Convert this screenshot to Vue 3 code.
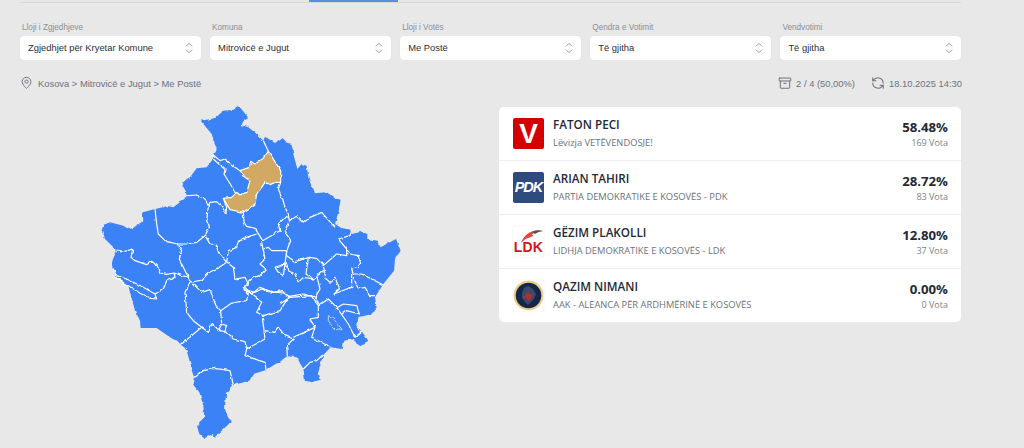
<script setup>
const filters = [
  { label: 'Lloji i Zgjedhjeve', value: 'Zgjedhjet për Kryetar Komune' },
  { label: 'Komuna', value: 'Mitrovicë e Jugut' },
  { label: 'Lloji i Votës', value: 'Me Postë' },
  { label: 'Qendra e Votimit', value: 'Të gjitha' },
  { label: 'Vendvotimi', value: 'Të gjitha' },
]
const rows = [
  { name: 'FATON PECI', party: 'Lëvizja VETËVENDOSJE!', pct: '58.48%', votes: '169 Vota', logo: 'v' },
  { name: 'ARIAN TAHIRI', party: 'PARTIA DEMOKRATIKE E KOSOVËS - PDK', pct: '28.72%', votes: '83 Vota', logo: 'pdk' },
  { name: 'GËZIM PLAKOLLI', party: 'LIDHJA DEMOKRATIKE E KOSOVËS - LDK', pct: '12.80%', votes: '37 Vota', logo: 'ldk' },
  { name: 'QAZIM NIMANI', party: 'AAK - ALEANCA PËR ARDHMËRINË E KOSOVËS', pct: '0.00%', votes: '0 Vota', logo: 'aak' },
]
const outline = 'M332 65 375 58 400 35 432 32 438 20 450 25 474 55 462 62 455 78 475 85 500 105 520 125 525 113 545 125 555 132 578 118 590 130 605 135 610 165 622 210 635 195 650 200 655 235 672 283 710 280 735 298 752 302 745 340 735 375 755 388 785 392 785 405 815 398 832 405 832 420 860 425 872 445 918 420 932 455 915 480 912 515 880 555 855 595 860 625 845 645 805 655 800 690 815 697 835 725 805 743 792 720 760 725 755 750 722 745 700 768 685 820 692 842 665 850 645 845 640 810 620 775 592 772 565 790 528 813 490 825 478 845 430 858 408 885 405 930 412 950 422 970 395 995 375 1013 368 1005 345 1017 328 1005 320 978 343 955 340 920 328 880 310 858 315 835 300 790 290 755 275 735 240 715 200 687 152 687 150 665 135 635 115 560 80 535 68 510 65 490 80 455 70 445 45 420 35 395 40 378 60 370 100 380 125 390 160 365 158 340 195 330 235 322 250 325 295 290 275 255 290 240 300 235 320 208 350 205 365 185 375 160 380 150 365 105Z'
const gold = 'M535 157 572 215 572 250 555 250 540 257 525 250 515 265 500 285 495 315 460 340 420 332 400 298 425 295 440 280 450 288 470 280 480 245 465 235 450 215 478 205 482 187 495 195 520 178Z'
const borders = [
  'M370 168 390 185 405 180 435 205 450 215',
  'M370 180 405 212 402 225 430 270 440 285',
  'M535 157 520 125',
  'M572 250 565 270 578 300 585 325 595 345 598 365 585 395 602 425 590 455',
  'M460 340 462 370 470 382 495 388 518 425 570 395 565 375 590 350',
  'M400 298 410 325 408 342 395 322 380 308 360 310 355 322 345 300 320 288 295 290',
  'M195 330 200 375 205 405 228 428 265 435 290 435 320 430 345 410 358 385 350 365 355 322',
  'M345 410 360 435 378 437 385 460 410 490',
  'M410 490 415 455 440 445 445 425 470 415 500 405',
  'M80 453 105 457 128 450 123 475 135 485 170 497 185 487 202 500 210 522 230 526 252 522 295 535',
  'M252 522 255 535 230 545 220 570 195 585',
  'M68 510 80 530 110 540 130 550 160 565 195 585 200 600 180 598 150 583 120 563 90 545 75 535',
  'M262 435 275 455 268 480 280 505 295 535 302 550',
  'M302 550 335 543 355 522 390 503 410 490',
  'M410 490 430 505 435 540 465 535 475 555 460 565 475 590',
  'M300 550 285 580 290 640 310 665 335 685 275 735',
  'M310 555 335 580 360 572 378 620 392 635 425 612 470 605 475 580 462 572 495 580 515 570 535 578 580 582 597 592 570 635 520 650 500 640 515 610 490 590 470 572',
  'M392 635 395 675 385 695 405 698 410 680 395 675',
  'M385 695 365 675 355 700 335 685',
  'M405 698 430 720 465 728 470 750 525 720 517 655',
  'M470 750 465 770 525 790 528 813',
  'M525 695 555 700 565 685 585 710 610 720 590 740 592 772',
  'M597 592 640 585 665 592 685 620 685 655 660 660 675 685 610 715',
  'M675 685 665 715 722 745',
  'M685 620 715 600 740 625 775 675 795 715 815 697',
  'M640 810 660 790 680 785 698 768',
  'M315 835 340 815 375 808 420 815 430 858',
  'M598 365 620 352 640 372 660 355 695 340 735 385',
  'M515 430 525 480 510 495 528 510 510 530 490 535 465 560 460 570',
  'M520 450 535 445 545 455 590 455',
  'M590 455 590 470 615 488 655 475 680 478 700 500 740 465 770 470 770 450 745 420 780 410 785 395',
  'M770 450 780 465 805 470 812 490 805 505 785 510 790 525 815 525 880 558',
  'M655 475 648 525 670 540',
  'M555 505 585 495 580 530 565 520 555 505',
  'M590 455 585 495 595 515 615 525 625 550 640 535 670 540 700 515 680 530 690 570 675 595',
  'M700 500 708 540 720 550 735 535 748 570 732 585 770 570 785 565 785 525',
  'M790 535 805 570 825 565 840 590 855 590',
  'M465 565 485 585 510 565 550 580 575 575 600 595 665 590 675 595 690 620',
  'M600 595 570 615',
  'M735 630 760 615 800 620 808 645 770 635 755 645',
]
</script>

<template>
  <div class="page">
    <div class="tabs"><span class="tab"></span></div>

    <div class="filters">
      <div v-for="f in filters" :key="f.label" class="filter">
        <div class="label">{{ f.label }}</div>
        <div class="select">
          <span>{{ f.value }}</span>
          <svg class="chev" width="10" height="12" viewBox="0 0 10 12" fill="none" stroke="#9ca3af" stroke-width="1" stroke-linecap="round" stroke-linejoin="round">
            <path d="M2 4 5 1.500 8 4M2 8 5 10.500 8 8" />
          </svg>
        </div>
      </div>
    </div>

    <div class="meta">
      <div class="crumbs">
        <svg width="13" height="14" viewBox="0 0 24 24" fill="none" stroke="#6b7280" stroke-width="1.800">
          <path d="M12 22s8-6.500 8-12.500a8 8 0 1 0-16 0C4 15.500 12 22 12 22Z" />
          <circle cx="12" cy="9.500" r="3" />
        </svg>
        <span>Kosova &gt; Mitrovicë e Jugut &gt; Me Postë</span>
      </div>
      <div class="status">
        <svg width="14" height="14" viewBox="0 0 24 24" fill="none" stroke="#6b7280" stroke-width="1.700" stroke-linecap="round" stroke-linejoin="round">
          <rect x="2" y="3.500" width="20" height="5" rx="1" />
          <path d="M4 8.500V20a1 1 0 0 0 1 1h14a1 1 0 0 0 1-1V8.500M10 12.500h4" />
        </svg>
        <span class="count">2 / 4 (50,00%)</span>
        <svg width="14" height="14" viewBox="0 0 24 24" fill="none" stroke="#6b7280" stroke-width="1.800" stroke-linecap="round" stroke-linejoin="round">
          <path d="M21 12a9 9 0 0 0-15.500-6.200L3 8.300M3 3v5.300h5.300M3 12a9 9 0 0 0 15.500 6.200l2.500-2.500M21 21v-5.300h-5.300" />
        </svg>
        <span>18.10.2025 14:30</span>
      </div>
    </div>

    <div class="main">
      <div class="map-col">
        <svg class="map" width="320" height="345" viewBox="0 0 960 1035">
          <defs>
            <filter id="rough" x="-5%" y="-5%" width="110%" height="110%">
              <feTurbulence type="fractalNoise" baseFrequency="0.06" numOctaves="2" seed="4" />
              <feDisplacementMap in="SourceGraphic" scale="9" xChannelSelector="R" yChannelSelector="G" />
            </filter>
          </defs>
          <g filter="url(#rough)">
            <path :d="outline" fill="#3b82f6" />
            <path v-for="(b, i) in borders" :key="i" :d="b" fill="none" stroke="#fff" stroke-width="3.600" stroke-linejoin="round" />
            <path d="M715 650 728 655 735 665 755 690 740 695 725 680 715 665Z" fill="none" stroke="#bcd4f8" stroke-width="3" />
            <path :d="gold" fill="#d1a964" stroke="#fff" stroke-width="3.600" stroke-linejoin="round" />
          </g>
        </svg>
      </div>

      <div class="card">
        <div v-for="r in rows" :key="r.name" class="row">
          <div class="logo" :class="'logo-' + r.logo">
            <span v-if="r.logo === 'v'" class="v-mark">V</span>
            <span v-else-if="r.logo === 'pdk'" class="pdk-mark">PDK</span>
            <template v-else-if="r.logo === 'ldk'">
              <svg class="swoosh" width="26" height="14" viewBox="0 0 26 14">
                <path d="M3 14C5 8 10 3 17 1.500c3-.5 6-.3 8 .5-5 0-9 1.500-11 3.500l1.500 1.500-8 3Z" fill="#e04848" />
                <path d="M14 3c3-1.500 7-2 11-1-3 .3-6 1.500-8 3Z" fill="#555" />
              </svg>
              <span class="ldk-mark">LDK</span>
            </template>
            <svg v-else width="31" height="31" viewBox="0 0 31 31">
              <circle cx="15.500" cy="15.500" r="15" fill="#e8cf8a" />
              <circle cx="15.500" cy="15.500" r="12.800" fill="#16264a" />
              <path d="M11 8l4-2 5 3 3 5-2 5-3 3-3 3-3-3-3-4 0-5Z" fill="#3a4a6a" />
              <path d="M10 18l5-6 3 3 3-1-3 5-3 2-2-3Z" fill="#a8322e" />
            </svg>
          </div>
          <div class="who">
            <div class="name">{{ r.name }}</div>
            <div class="party">{{ r.party }}</div>
          </div>
          <div class="result">
            <div class="pct">{{ r.pct }}</div>
            <div class="votes">{{ r.votes }}</div>
          </div>
        </div>
      </div>
    </div>
  </div>
</template>

<style scoped>
.page {
  box-sizing: border-box;
  width: 1024px;
  height: 448px;
  overflow: hidden;
  padding: 0 63px 0 20px;
  background: #e8e8e8;
  font-family: "Liberation Sans", Arial, sans-serif;
}
.tabs {
  position: relative;
  height: 3px;
  border-bottom: 1px solid #d8d8d8;
  box-sizing: border-box;
}
.tab {
  position: absolute;
  left: 289px;
  top: 0;
  width: 89px;
  height: 2px;
  background: #5b8fe0;
}
.filters {
  display: grid;
  grid-template-columns: repeat(5, 1fr);
  gap: 9.500px;
  margin-top: 19px;
}
.label {
  height: 14px;
  padding-left: 2px;
  font-size: 8.200px;
  line-height: 11px;
  color: #8b8f96;
}
.select {
  display: flex;
  align-items: center;
  justify-content: space-between;
  height: 24px;
  padding: 0 8px;
  background: #fff;
  border-radius: 4px;
  box-shadow: 0 0 1px rgba(0, 0, 0, 0.1);
  font-size: 9.400px;
  line-height: 22px;
  color: #2b2f38;
}
.select span { margin-bottom: 1px; }
.chev { margin-right: -1px; }
.meta {
  display: flex;
  align-items: center;
  justify-content: space-between;
  height: 16px;
  margin: 15px -1px 0 0;
  font-size: 9.400px;
  color: #6b7280;
}
.crumbs, .status {
  display: flex;
  align-items: center;
}
.crumbs svg { margin-right: 5px; }
.status svg { margin-right: 4px; }
.count { margin-right: 16px; }
.main {
  display: grid;
  grid-template-columns: 479px 462px;
  margin-top: 8px;
}
.map-col { padding-left: 70px; height: 340px; }
.map { display: block; }
.card {
  align-self: start;
  margin-top: 8px;
  background: #fff;
  border-radius: 5px;
  font-family: "Open Sans", "Noto Sans", sans-serif;
}
.row {
  display: flex;
  align-items: center;
  box-sizing: border-box;
  height: 54px;
  padding: 0 13px 0 14px;
  border-bottom: 1px solid #eceef0;
}
.row:last-child { border-bottom: 0; height: 53px; }
.logo {
  position: relative;
  flex: none;
  display: flex;
  align-items: center;
  justify-content: center;
  width: 31px;
  height: 31px;
  margin: -1px 9px 0 0;
  border-radius: 2px;
  overflow: hidden;
}
.logo-v { background: #d40000; }
.logo-pdk { background: #2e4a7f; }
.logo-ldk, .logo-aak { background: #fff; box-shadow: 0 0 1px rgba(0, 0, 0, 0.2); }
.v-mark {
  font: bold 28px/31px "Liberation Sans", sans-serif;
  color: #fff;
}
.pdk-mark {
  font: italic bold 14.500px/31px "Liberation Sans", sans-serif;
  color: #fff;
  letter-spacing: -1px;
}
.ldk-mark {
  position: absolute;
  left: 0;
  right: 0;
  top: 14px;
  text-align: center;
  font: bold 14px/14px "Liberation Sans", sans-serif;
  letter-spacing: 0.2px;
  color: #d9141c;
}
.swoosh { position: absolute; left: 5px; top: 3px; }
.who { flex: 1; min-width: 0; margin-top: -2px; }
.name {
  font-size: 11.700px;
  font-weight: 600;
  line-height: 17px;
  color: #1f2937;
}
.party {
  margin-top: 4px;
  font-size: 9.350px;
  font-weight: 500;
  line-height: 12px;
  color: #6b7280;
}
.result { text-align: right; margin-top: -1px; }
.pct {
  font-size: 13.200px;
  font-weight: 700;
  line-height: 18px;
  color: #1f2937;
}
.votes {
  margin-top: 1px;
  font-size: 9px;
  line-height: 12px;
  color: #7b818b;
}
</style>

<style>
html, body { margin: 0; background: #e8e8e8; }
</style>
